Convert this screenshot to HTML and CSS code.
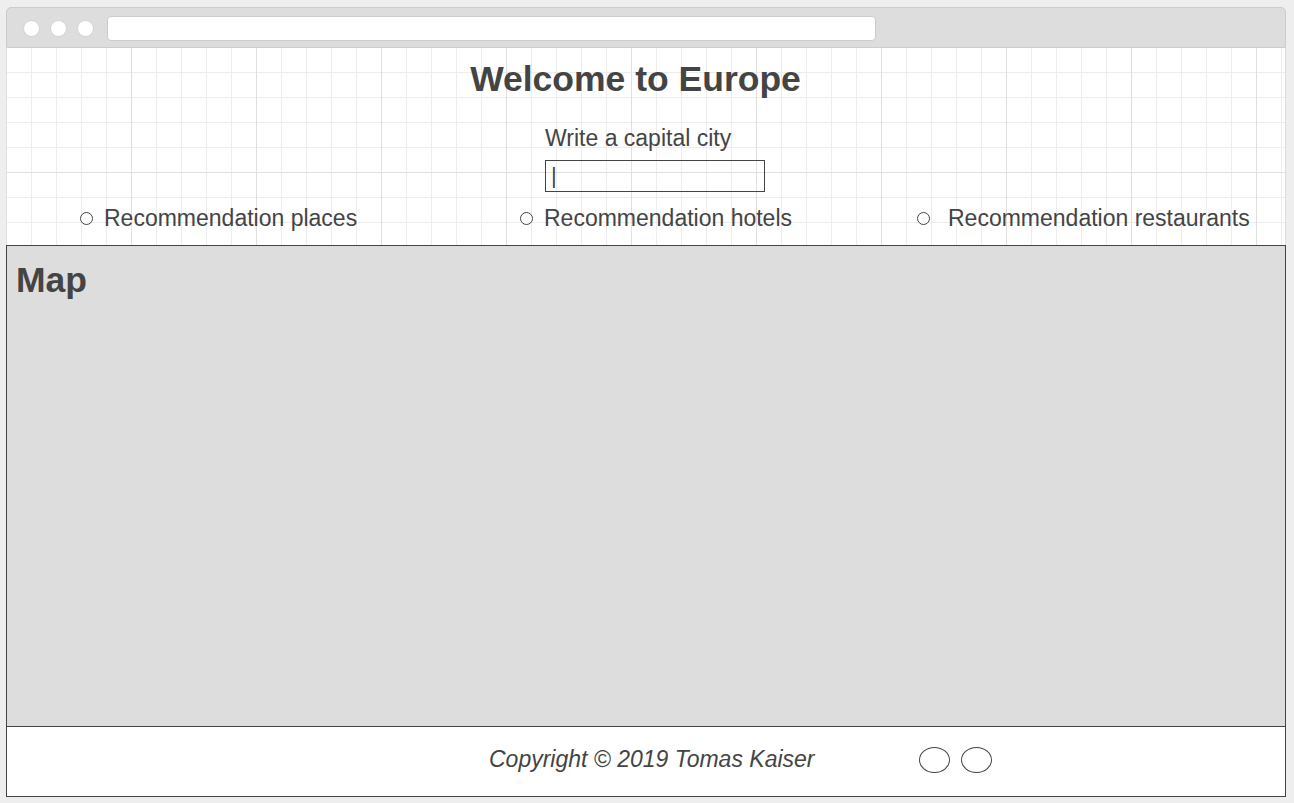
FILE: index.html
```html
<!DOCTYPE html>
<html lang="en">

<head>
    <meta charset="UTF-8">
    <meta name="viewport" content="width=device-width, initial-scale=1.0">
    <title>Welcome to Europe</title>
    <link rel="stylesheet" href="styles.css">
</head>

<body>
    <div class="window">
        <div class="titlebar">
            <span class="dot"></span>
            <span class="dot"></span>
            <span class="dot"></span>
            <div class="address"></div>
        </div>

        <header class="header">
            <h1 class="title">Welcome to Europe</h1>

            <div class="search">
                <label for="city" class="search-label">Write a capital city</label>
                <input id="city" class="search-input" type="text" value="|" readonly>
            </div>

            <div class="options">
                <label class="option"><span class="radio"></span>Recommendation places</label>
                <label class="option"><span class="radio"></span>Recommendation hotels</label>
                <label class="option option-wide"><span class="radio"></span>Recommendation restaurants</label>
            </div>
        </header>

        <main class="map">
            <h2 class="map-title">Map</h2>
        </main>

        <footer class="footer">
            <p class="copyright">Copyright © 2019 Tomas Kaiser</p>
            <div class="socials">
                <span class="social"></span>
                <span class="social"></span>
            </div>
        </footer>
    </div>
</body>

</html>
```

FILE: styles.css
```css
* {
    box-sizing: border-box;
}

body {
    font-family: 'Liberation Sans', Arial, sans-serif;
    background-color: #eeeeee;
    color: #444;
    margin: 0;
    padding: 7px 0 0 6px;
}

.window {
    width: 1280px;
}

.titlebar {
    height: 41px;
    display: flex;
    align-items: center;
    padding: 2px 0 0 16px;
    background-color: #dddddd;
    border: 1px solid #cccccc;
    border-radius: 5px 5px 0 0;
}

.dot {
    width: 17px;
    height: 17px;
    margin-right: 10px;
    border-radius: 50%;
    background-color: #fff;
    border: 1px solid #d2d2d2;
}

.address {
    width: 769px;
    height: 25px;
    margin-left: 3px;
    background-color: #fff;
    border: 1px solid #cccccc;
    border-radius: 4px;
}

.header {
    height: 197px;
    padding-top: 11px;
    border-right: 1px solid #dddddd;
    background-color: #fff;
    background-image:
        linear-gradient(to right, #e0e0e0 1px, transparent 1px),
        linear-gradient(to bottom, #e0e0e0 1px, transparent 1px),
        linear-gradient(to right, #ededed 1px, transparent 1px),
        linear-gradient(to bottom, #ededed 1px, transparent 1px);
    background-size: 125px 125px, 125px 125px, 25px 25px, 25px 25px;
    background-position: 0 -1px;
}

.title {
    margin: 0;
    padding-right: 20px;
    text-align: center;
    font-size: 35.5px;
    line-height: 40px;
    font-weight: bold;
}

.search {
    width: 220px;
    margin: 25px 0 0 539px;
}

.search-label {
    display: block;
    font-size: 23px;
    line-height: 28px;
}

.search-input {
    display: block;
    width: 220px;
    height: 32px;
    margin-top: 8px;
    padding: 0 5px;
    border: 1px solid #444;
    background: transparent;
    color: #444;
    font-family: inherit;
    font-size: 22px;
    outline: none;
}

.options {
    display: grid;
    grid-template-columns: 440px 397px 1fr;
    margin-top: 13px;
    padding-left: 74px;
    font-size: 23px;
    line-height: 26px;
}

.option {
    display: flex;
    align-items: center;
}

.radio {
    width: 13px;
    height: 13px;
    margin-right: 11px;
    border: 1px solid #444;
    border-radius: 50%;
    background-color: #fff;
}

.option-wide .radio {
    margin-right: 18px;
}

.map {
    height: 482px;
    padding: 14px 9px;
    background-color: #dddddd;
    border: 1px solid #444;
}

.map-title {
    margin: 0;
    font-size: 35.5px;
    line-height: 40px;
    font-weight: bold;
}

.footer {
    height: 70px;
    display: grid;
    grid-template-columns: 430px auto;
    align-items: center;
    padding: 0 0 4px 482px;
    background-color: #fff;
    border: 1px solid #444;
    border-top: none;
}

.copyright {
    margin: 0;
    font-size: 23px;
    font-style: italic;
}

.socials {
    display: flex;
    gap: 11px;
}

.social {
    width: 31px;
    height: 26px;
    border: 1px solid #444;
    border-radius: 50%;
}
```
